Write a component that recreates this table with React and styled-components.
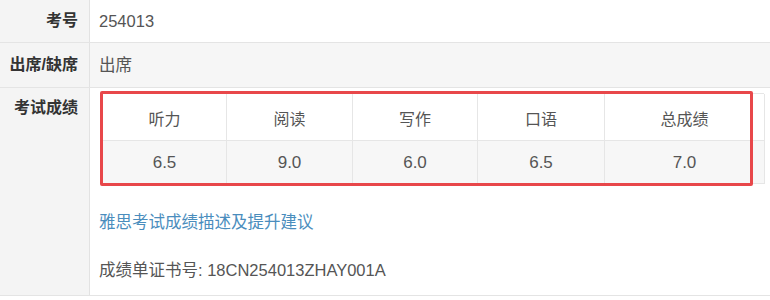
import React from "react";
import styled, { createGlobalStyle } from "styled-components";

const Global = createGlobalStyle`
  html, body { margin: 0; padding: 0; background: #fff; }
  body { font-family: "Liberation Sans", "Noto Sans CJK SC", sans-serif; color: #555; }
`;

const Page = styled.div`
  width: 770px;
  height: 300px;
  overflow: hidden;
  display: flex;
  flex-direction: column;
`;

const Row = styled.div`
  display: grid;
  grid-template-columns: 90px 1fr;
  height: ${(p) => p.$h}px;
  border-bottom: 1px solid #e4e4e4;
  background: ${(p) => (p.$striped ? "#f6f6f6" : "#fff")};
  flex: 0 0 auto;
`;

const Label = styled.div`
  background: #f4f4f4;
  border-right: 1px solid #e2e2e2;
  font-weight: bold;
  font-size: 16px;
  color: #333;
  text-align: right;
  padding-right: 11px;
  display: flex;
  justify-content: flex-end;
  align-items: ${(p) => (p.$top ? "flex-start" : "center")};
  padding-top: ${(p) => (p.$top ? "10px" : "0")};
  line-height: 20px;
`;

const Value = styled.div`
  font-size: 16.5px;
  color: #555;
  padding-left: 9px;
  display: flex;
  align-items: center;
  line-height: 20px;
`;

const ScoreValue = styled.div`
  padding: 5px 0 0 12px;
  display: flex;
  flex-direction: column;
`;

const TableWrap = styled.div`
  position: relative;
  width: 662px;
`;

const Table = styled.div`
  display: grid;
  grid-template-columns: 124px 126px 125px 127px 160px;
  grid-template-rows: 47px 43px;
  border: 1px solid #e6e6e6;
  border-right: none;
  border-bottom: none;
`;

const Cell = styled.div`
  display: flex;
  align-items: center;
  justify-content: center;
  border-right: 1px solid #e6e6e6;
  border-bottom: 1px solid #e6e6e6;
  background: ${(p) => (p.$head ? "#fff" : "#f7f7f7")};
  font-size: ${(p) => (p.$head ? "16px" : "17px")};
  color: #555;
  padding-top: ${(p) => (p.$head ? "1px" : "2px")};
`;

const Highlight = styled.div`
  position: absolute;
  left: -2px;
  top: -2px;
  width: 647px;
  height: 89px;
  border: 3px solid #e8474a;
  border-radius: 2px;
  pointer-events: none;
`;

const Link = styled.a`
  margin-top: 28px;
  font-size: 16.5px;
  color: #4a8dbd;
  text-decoration: none;
  line-height: 20px;
  margin-left: -3px;
`;

const Cert = styled.div`
  margin-top: 28px;
  font-size: 16.5px;
  color: #555;
  line-height: 20px;
  margin-left: -3px;
`;

const heads = ["听力", "阅读", "写作", "口语", "总成绩"];
const scores = ["6.5", "9.0", "6.0", "6.5", "7.0"];

export default function App() {
  return (
    <>
      <Global />
      <Page>
        <Row $h={42}>
          <Label>考号</Label>
          <Value>254013</Value>
        </Row>
        <Row $h={44} $striped>
          <Label>出席/缺席</Label>
          <Value>出席</Value>
        </Row>
        <Row $h={207}>
          <Label $top>考试成绩</Label>
          <ScoreValue>
            <TableWrap>
              <Table>
                {heads.map((h) => (
                  <Cell $head key={h}>{h}</Cell>
                ))}
                {scores.map((s, i) => (
                  <Cell key={i}>{s}</Cell>
                ))}
              </Table>
              <Highlight />
            </TableWrap>
            <Link href="#">雅思考试成绩描述及提升建议</Link>
            <Cert>成绩单证书号: 18CN254013ZHAY001A</Cert>
          </ScoreValue>
        </Row>
      </Page>
    </>
  );
}
